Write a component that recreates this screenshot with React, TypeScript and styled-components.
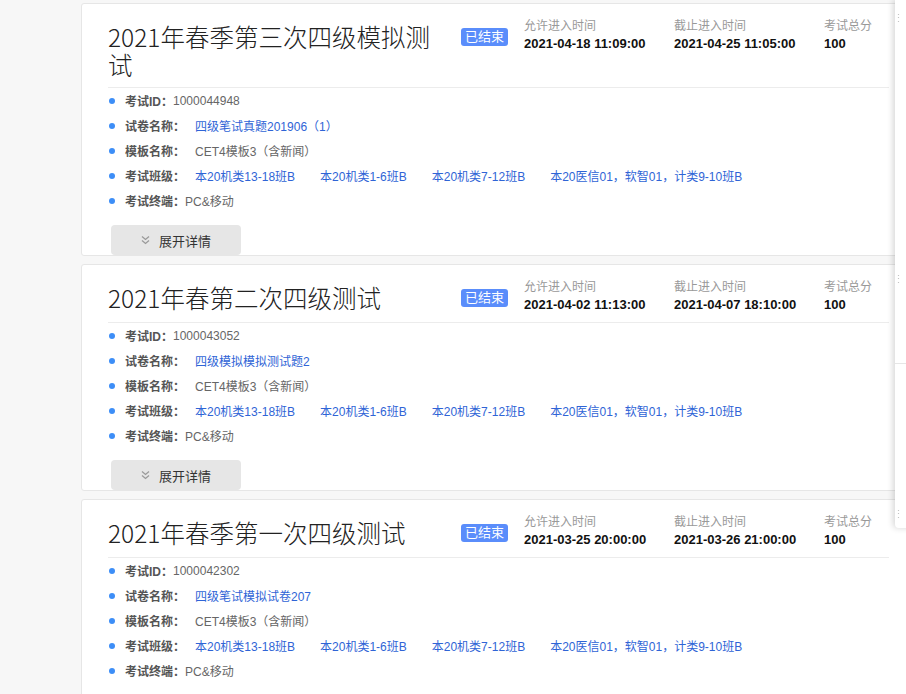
import React from 'react';
import styled, { createGlobalStyle } from 'styled-components';

interface Exam {
  title: string;
  allowTime: string;
  endTime: string;
  score: string;
  id: string;
  paper: string;
  template: string;
  classes: string[];
  terminal: string;
}

const exams: Exam[] = [
  {
    title: '2021年春季第三次四级模拟测试',
    allowTime: '2021-04-18 11:09:00',
    endTime: '2021-04-25 11:05:00',
    score: '100',
    id: '1000044948',
    paper: '四级笔试真题201906（1）',
    template: 'CET4模板3（含新闻）',
    classes: ['本20机类13-18班B', '本20机类1-6班B', '本20机类7-12班B', '本20医信01，软智01，计类9-10班B'],
    terminal: 'PC&移动',
  },
  {
    title: '2021年春第二次四级测试',
    allowTime: '2021-04-02 11:13:00',
    endTime: '2021-04-07 18:10:00',
    score: '100',
    id: '1000043052',
    paper: '四级模拟模拟测试题2',
    template: 'CET4模板3（含新闻）',
    classes: ['本20机类13-18班B', '本20机类1-6班B', '本20机类7-12班B', '本20医信01，软智01，计类9-10班B'],
    terminal: 'PC&移动',
  },
  {
    title: '2021年春季第一次四级测试',
    allowTime: '2021-03-25 20:00:00',
    endTime: '2021-03-26 21:00:00',
    score: '100',
    id: '1000042302',
    paper: '四级笔试模拟试卷207',
    template: 'CET4模板3（含新闻）',
    classes: ['本20机类13-18班B', '本20机类1-6班B', '本20机类7-12班B', '本20医信01，软智01，计类9-10班B'],
    terminal: 'PC&移动',
  },
];

const ChevronsDown = (): JSX.Element => (
  <svg width="9" height="10" viewBox="0 0 9 10" fill="none" stroke="#9a9a9a" strokeWidth="1.3">
    <polyline points="1,1.5 4.5,4.5 8,1.5" />
    <polyline points="1,5.5 4.5,8.5 8,5.5" />
  </svg>
);

const ExamCard = ({ exam }: { exam: Exam }): JSX.Element => (
  <Card>
    <Handle>⋮</Handle>
    <Header>
      <Title>{exam.title}</Title>
      <Badge>已结束</Badge>
      <Meta>
        <MetaCol>
          <MetaLabel>允许进入时间</MetaLabel>
          <MetaValue>{exam.allowTime}</MetaValue>
        </MetaCol>
        <MetaCol>
          <MetaLabel>截止进入时间</MetaLabel>
          <MetaValue>{exam.endTime}</MetaValue>
        </MetaCol>
        <MetaCol>
          <MetaLabel>考试总分</MetaLabel>
          <MetaValue>{exam.score}</MetaValue>
        </MetaCol>
      </Meta>
    </Header>
    <InfoList>
      <InfoRow>
        <Dot />
        <Label>考试ID：</Label>
        <Value>{exam.id}</Value>
      </InfoRow>
      <InfoRow>
        <Dot />
        <Label>试卷名称：</Label>
        <Value spaced link>{exam.paper}</Value>
      </InfoRow>
      <InfoRow>
        <Dot />
        <Label>模板名称：</Label>
        <Value spaced>{exam.template}</Value>
      </InfoRow>
      <InfoRow>
        <Dot />
        <Label>考试班级：</Label>
        <ClassList>
          {exam.classes.map((c) => (
            <Value link key={c}>{c}</Value>
          ))}
        </ClassList>
      </InfoRow>
      <InfoRow>
        <Dot />
        <Label>考试终端：</Label>
        <Value>{exam.terminal}</Value>
      </InfoRow>
    </InfoList>
    <ExpandButton type="button">
      <ChevronsDown />
      展开详情
    </ExpandButton>
  </Card>
);

const App = (): JSX.Element => (
  <>
    <GlobalStyle />
    <Page>
      {exams.map((e) => (
        <ExamCard exam={e} key={e.id} />
      ))}
    </Page>
    <SidePanel>
      <PanelDivider />
    </SidePanel>
  </>
);

export default App;

const GlobalStyle = createGlobalStyle`
  html, body {
    margin: 0;
    padding: 0;
    overflow: hidden;
    background: #f7f7f7;
    font-family: "Liberation Sans", "Noto Sans CJK SC", sans-serif;
  }
`;

const Page = styled.div`
  display: flex;
  flex-direction: column;
  gap: 8px;
  padding: 3px 0 0 81px;
  width: 836px;
`;

const Card = styled.div`
  position: relative;
  background: #fff;
  border: 1px solid #e6e6e6;
  border-radius: 3px;
  padding: 0 27px 0 26px;
  width: 836px;
  box-sizing: border-box;
  flex-shrink: 0;
`;

const Handle = styled.span`
  position: absolute;
  top: 8px;
  left: 811px;
  z-index: 5;
  font-size: 11px;
  color: #c4c4c4;
`;

const Header = styled.div`
  display: flex;
  align-items: flex-start;
  padding: 13px 0 8px;
  border-bottom: 1px solid #ececec;
`;

const Title = styled.h2`
  flex: 0 0 340px;
  width: 340px;
  margin: 6px 13px 0 0;
  font-family: "Noto Sans CJK SC", "Noto Sans", sans-serif;
  font-size: 24.5px;
  line-height: 28px;
  font-weight: 300;
  color: #222;
`;

const Badge = styled.span`
  flex-shrink: 0;
  margin-top: 11px;
  height: 18px;
  padding: 0 4px;
  border-radius: 3px;
  background: #5a8dfb;
  color: #fff;
  font-size: 13px;
  line-height: 18px;
`;

const Meta = styled.div`
  display: flex;
  flex: 1;
  margin-left: 16px;
`;

const MetaCol = styled.div`
  display: flex;
  flex-direction: column;
  flex: 0 0 150px;
  &:last-child {
    flex: 1;
  }
`;

const MetaLabel = styled.span`
  font-size: 12px;
  line-height: 18px;
  color: #999;
`;

const MetaValue = styled.span`
  font-size: 13px;
  line-height: 18px;
  font-weight: bold;
  color: #111;
  white-space: nowrap;
`;

const InfoList = styled.div`
  display: flex;
  flex-direction: column;
`;

const InfoRow = styled.div`
  display: flex;
  align-items: center;
  height: 25px;
  font-size: 12px;
`;

const Dot = styled.span`
  width: 6px;
  height: 6px;
  border-radius: 50%;
  background: #3d8ef7;
  margin: 0 10px 0 1px;
`;

const Label = styled.span`
  color: #555;
  font-weight: bold;
`;

const Value = styled.span<{ spaced?: boolean; link?: boolean }>`
  margin-left: ${(p) => (p.spaced ? '10px' : '0')};
  color: ${(p) => (p.link ? '#2f64d6' : '#666')};
  white-space: nowrap;
`;

const ClassList = styled.div`
  display: flex;
  gap: 25px;
  margin-left: 10px;
`;

const ExpandButton = styled.button`
  display: flex;
  align-items: center;
  justify-content: center;
  gap: 9px;
  width: 130px;
  height: 30px;
  margin: 12px 0 0 3px;
  padding: 0;
  border: none;
  border-radius: 4px;
  background: #e6e6e6;
  font-family: "Liberation Sans", "Noto Sans CJK SC", sans-serif;
  font-size: 13px;
  color: #333;
`;

const SidePanel = styled.div`
  position: fixed;
  top: 0;
  left: 895px;
  width: 30px;
  height: 528px;
  background: #fff;
  border-bottom-left-radius: 4px;
  box-shadow: -2px 0 6px rgba(0, 0, 0, 0.16);
  z-index: 2;
`;

const PanelDivider = styled.div`
  margin-top: 363px;
  border-top: 1px solid #e6e6e6;
`;
